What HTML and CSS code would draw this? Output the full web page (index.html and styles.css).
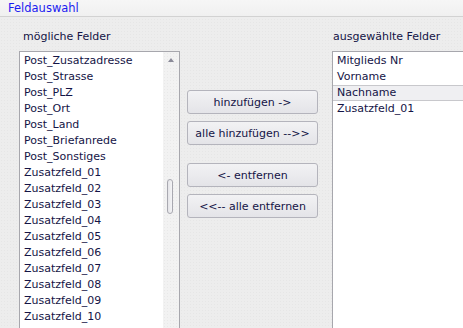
FILE: index.html
```html
<!DOCTYPE html>
<html>
<head>
<meta charset="utf-8">
<link rel="stylesheet" href="styles.css">
</head>
<body>
<div class="titlebar">Feldauswahl</div>
<div class="main">
  <div class="col left">
    <div class="label">mögliche Felder</div>
    <div class="listbox">
      <ul class="items">
        <li>Post_Zusatzadresse</li>
        <li>Post_Strasse</li>
        <li>Post_PLZ</li>
        <li>Post_Ort</li>
        <li>Post_Land</li>
        <li>Post_Briefanrede</li>
        <li>Post_Sonstiges</li>
        <li>Zusatzfeld_01</li>
        <li>Zusatzfeld_02</li>
        <li>Zusatzfeld_03</li>
        <li>Zusatzfeld_04</li>
        <li>Zusatzfeld_05</li>
        <li>Zusatzfeld_06</li>
        <li>Zusatzfeld_07</li>
        <li>Zusatzfeld_08</li>
        <li>Zusatzfeld_09</li>
        <li>Zusatzfeld_10</li>
      </ul>
      <div class="scrollbar">
        <div class="arrow"></div>
        <div class="thumb"></div>
      </div>
    </div>
  </div>
  <div class="buttons">
    <div class="group">
      <button class="btn">hinzufügen -&gt;</button>
      <button class="btn">alle hinzufügen --&gt;&gt;</button>
    </div>
    <div class="group">
      <button class="btn">&lt;- entfernen</button>
      <button class="btn">&lt;&lt;-- alle entfernen</button>
    </div>
  </div>
  <div class="col right">
    <div class="label">ausgewählte Felder</div>
    <div class="listbox sel">
      <ul class="items">
        <li>Mitglieds Nr</li>
        <li>Vorname</li>
        <li class="active">Nachname</li>
        <li>Zusatzfeld_01</li>
      </ul>
    </div>
  </div>
</div>
</body>
</html>
```
FILE: styles.css
```css
html, body {
  margin: 0;
  padding: 0;
  width: 463px;
  height: 328px;
  overflow: hidden;
}
body {
  background-color: #ededed;
  background-image: radial-gradient(#e6e6e6 0.6px, transparent 0.8px);
  background-size: 3px 3px;
  font-family: Tahoma, "DejaVu Sans", sans-serif;
  font-size: 11px;
  color: #141446;
}
.titlebar {
  height: 17px;
  line-height: 16px;
  padding-left: 8px;
  font-size: 11.5px;
  color: #1c1cf0;
  background: linear-gradient(#f6f6f6, #f0f0f0);
  border-bottom: 1px solid #d2d2d2;
  box-sizing: border-box;
}
.main {
  display: flex;
  padding-left: 19px;
}
.col {
  display: flex;
  flex-direction: column;
}
.label {
  height: 34px;
  line-height: 40px;
  padding-left: 4px;
  font-size: 11px;
}
.left .listbox {
  width: 161px;
}
.listbox {
  display: flex;
  height: 290px;
  background: #fff;
  border: 1px solid #a7a7ad;
  border-bottom: none;
  box-sizing: border-box;
}
.items {
  list-style: none;
  margin: 0;
  padding: 1px 0 0;
  flex: 1;
  overflow: hidden;
}
.items li {
  height: 16px;
  line-height: 16px;
  padding-left: 4px;
  white-space: nowrap;
  box-sizing: border-box;
}
.items li.active {
  background: #efeff2;
  border-top: 1px solid #c8c8cc;
  border-bottom: 1px solid #c8c8cc;
  line-height: 14px;
}
.scrollbar {
  width: 16px;
  background-color: #f2f2f2;
  background-image: radial-gradient(#e9e9e9 0.6px, transparent 0.8px);
  background-size: 3px 3px;
}
.arrow {
  margin: 6px auto 0;
  width: 0;
  height: 0;
  border-left: 3px solid transparent;
  border-right: 3px solid transparent;
  border-bottom: 4px solid #8a8a98;
}
.thumb {
  margin: 117px 0 0 4px;
  width: 6px;
  height: 35px;
  border: 1px solid #a8a8b0;
  border-radius: 4px;
  background: linear-gradient(90deg, #e4e4e8, #f4f4f6);
  box-sizing: border-box;
}
.buttons {
  width: 131px;
  margin-left: 7px;
  margin-right: 14px;
  padding-top: 73px;
  display: flex;
  flex-direction: column;
  gap: 18px;
}
.group {
  display: flex;
  flex-direction: column;
  gap: 7px;
}
.btn {
  height: 24px;
  width: 131px;
  padding: 0;
  font-family: Tahoma, "DejaVu Sans", sans-serif;
  font-size: 11px;
  color: #141446;
  background: linear-gradient(#f2f2f4, #e4e4e8);
  border: 1px solid #b4b4bc;
  border-radius: 3px;
}
.right .listbox {
  width: 140px;
  border-right: none;
}
.right .label {
  padding-left: 1px;
}
```
